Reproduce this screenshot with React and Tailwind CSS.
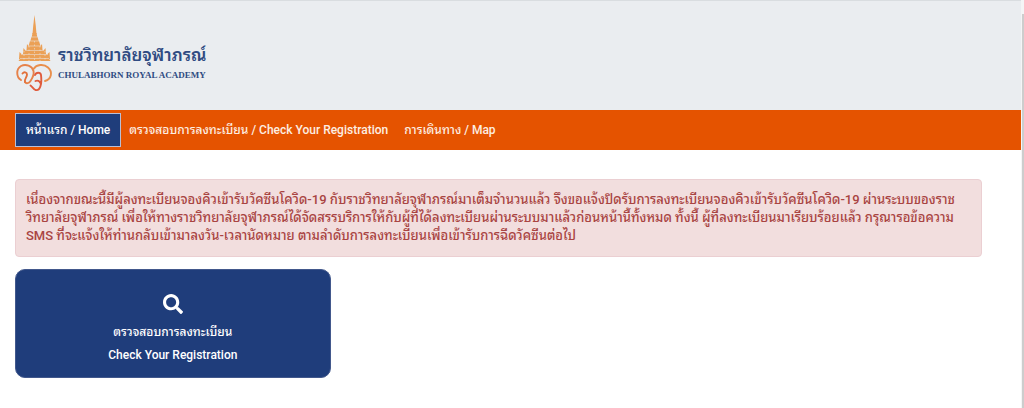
import { FaSearch } from "react-icons/fa";

const navLinks = [
  { label: "หน้าแรก / Home", href: "#home", active: true },
  { label: "ตรวจสอบการลงทะเบียน / Check Your Registration", href: "#check" },
  { label: "การเดินทาง / Map", href: "#map" },
];

function Emblem() {
  return (
    <svg
      viewBox="0 0 38 78"
      className="w-[38px] h-[78px]"
      fill="none"
      aria-hidden="true"
    >
      {/* Spire and tiers */}
      <g fill="#eba056">
        <path d="M18.500 0l1.200 10 .8 9h-4l.8-9z" />
        <path d="M16.500 18h4l.8 4h-5.600zM15.500 22h6l1.200 4h-8.400zM14 26h9l1.500 5h-12z" />
        <path d="M11 29l1.500 2h12l1.500-2 .5 6h-16z" />
        <path d="M7.500 33l1.500 2h19l1.500-2 .5 6H7z" />
        <path d="M3.500 37l2 2h26l2-2 .5 7H3z" />
        <path d="M4.500 43h28l2 3H2.500z" />
      </g>
      <g stroke="#eaedf0" strokeWidth=".5">
        <path d="M15.500 22h6M14 26h9M12 31h13M9 35.500h19M5 39.500h27M4 43.500h29" />
        <path
          d="M8 36v10M13 31v15M18.500 26v20M24 31v15M29 36v10"
          strokeDasharray="1.500 2"
        />
      </g>
      {/* Royal cypher */}
      <g strokeWidth="1.900" strokeLinecap="round" strokeLinejoin="round">
        <path
          d="M5 65C0 62 0 54 5 51c5-2.500 11 0 12.500 5 1 4-1 7-3 10-1.500 2.500-4.500 3-5.500 1"
          stroke="#e6824a"
        />
        <path
          d="M6.500 58.500c1.500-2 4.500-1.500 4.500 1 0 3-3 4.500-2 7.500"
          stroke="#e2703a"
        />
        <path
          d="M17.500 54c3-4.500 10-5.500 14.500-1.500 5 4.500 3.500 11.500-3 13.500"
          stroke="#e98f4c"
        />
        <path
          d="M19 60c1-3 5.500-3 6 0 .5 4 .5 8-.5 11-1 3.500-3 4.500-5 4-2-1-3-3-5-4.500M19.500 66c2-1 4 0 5 2"
          stroke="#df5b3d"
        />
      </g>
    </svg>
  );
}

function Header() {
  return (
    <header className="flex items-center h-[110px] px-4 pb-1 border-t border-[#d9dde0] bg-[#eaedf0]">
      <a href="#home" className="flex items-end gap-1 text-[#2f4b82]">
        <Emblem />
        <span className="flex flex-col pb-2.5 whitespace-nowrap">
          <span className="text-[17px] leading-6 font-semibold">
            ราชวิทยาลัยจุฬาภรณ์
          </span>
          <span className="font-['Liberation_Serif',serif] text-[9px] leading-4 font-bold">
            CHULABHORN ROYAL ACADEMY
          </span>
        </span>
      </a>
    </header>
  );
}

function Navbar() {
  return (
    <nav className="flex items-center h-10 px-[15px] bg-[#e55300]">
      {navLinks.map((link) => (
        <a
          key={link.href}
          href={link.href}
          className={
            link.active
              ? "flex items-center h-[34px] px-2.5 border border-[#b9bfd6] bg-[#1f3d7b] text-[12px] font-medium text-white whitespace-nowrap"
              : "flex items-center h-[34px] px-2 text-[12px] font-medium text-[#fdeee2] whitespace-nowrap"
          }
        >
          {link.label}
        </a>
      ))}
    </nav>
  );
}

function App() {
  return (
    <div className="min-h-screen flex bg-white font-[Roboto,'Noto_Sans_Thai_Looped','Loma',serif]">
      <div className="flex-1 min-w-0">
        <Header />
        <Navbar />

        <main className="pt-[29px] pl-[15px] pr-[39px]">
          <div
            role="alert"
            className="min-h-[78px] px-2.5 py-[11px] rounded border border-[#ebcfd2] bg-[#f2dede] text-[13px] leading-[18px] font-medium text-[#a94442]"
          >
            <p>
              เนื่องจากขณะนี้มีผู้ลงทะเบียนจองคิวเข้ารับวัคซีนโควิด-19
              กับราชวิทยาลัยจุฬาภรณ์มาเต็มจำนวนแล้ว
              จึงขอแจ้งปิดรับการลงทะเบียนจองคิวเข้ารับวัคซีนโควิด-19
              ผ่านระบบของราช
              <br />
              วิทยาลัยจุฬาภรณ์
              เพื่อให้ทางราชวิทยาลัยจุฬาภรณ์ได้จัดสรรบริการให้กับผู้ที่ได้ลงทะเบียนผ่านระบบมาแล้วก่อนหน้านี้ทั้งหมด
              ทั้งนี้ ผู้ที่ลงทะเบียนมาเรียบร้อยแล้ว กรุณารอข้อความ
              <br />
              SMS ที่จะแจ้งให้ท่านกลับเข้ามาลงวัน-เวลานัดหมาย
              ตามลำดับการลงทะเบียนเพื่อเข้ารับการฉีดวัคซีนต่อไป
            </p>
          </div>

          <div className="grid grid-cols-3 gap-2.5 mt-3">
            <button
              type="button"
              className="flex flex-col items-center h-[109px] pt-6 rounded-[10px] border border-[#42588c] bg-[#1f3d7b] text-[12px] leading-[23px] font-medium text-white"
            >
              <FaSearch size={20} className="mb-[7px]" />
              <span>ตรวจสอบการลงทะเบียน</span>
              <span>Check Your Registration</span>
            </button>
          </div>
        </main>
      </div>

      {/* Scrollbar edge */}
      <div className="w-[3px] pt-3.5 bg-[#f4f5f6]">
        <div className="h-full ml-px bg-[#cdcdcd]" />
      </div>
    </div>
  );
}

export default App;
